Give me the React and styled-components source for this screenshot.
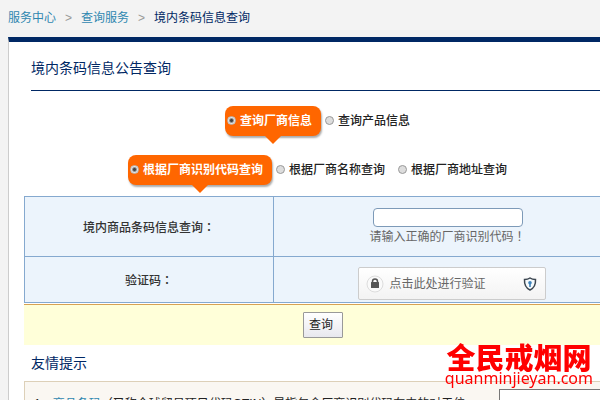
import React, { useState } from "react";
import styled, { createGlobalStyle } from "styled-components";

const GlobalStyle = createGlobalStyle`
  * {
    box-sizing: border-box;
  }

  body {
    margin: 0;
    height: 100vh;
    overflow: hidden;
    background: #f3f3f3;
    color: #333;
    font: 12px/18px "Liberation Sans", "Noto Sans CJK SC", sans-serif;
  }

  button,
  input {
    font: inherit;
  }
`;

const Breadcrumb = styled.nav`
  display: flex;
  gap: 9px;
  padding: 9px 8px 10px;
  color: #999;
`;

const Crumb = styled.a`
  color: ${(props) => (props.$current ? "#002864" : "#2f87b0")};
  text-decoration: none;
`;

const Panel = styled.main`
  margin-left: 8px;
  border-top: 5px solid #002864;
  border-left: 1px solid #ccc;
  background: white;
  overflow: hidden;
`;

const Content = styled.div`
  width: calc(100% + 22px);
  padding-left: 15px;
`;

const Title = styled.h1`
  margin: 0 0 0 7px;
  padding: 16px 0 12px;
  border-bottom: 1px solid #002864;
  color: #002864;
  font-size: 14px;
  font-weight: normal;
  line-height: 20px;
`;

const SubTitle = styled.h2`
  margin: 0 0 0 7px;
  padding: 8px 0;
  color: #002864;
  font-size: 14px;
  font-weight: normal;
  line-height: 20px;
`;

const Options = styled.div`
  display: flex;
  justify-content: center;
  gap: 4px;
  padding: 15px 2px 0 0;
  height: ${(props) => (props.$last ? "56px" : "49px")};
`;

const Option = styled.label`
  position: relative;
  display: flex;
  align-items: center;
  gap: 4px;
  height: 30px;
  padding: ${(props) => (props.$active ? "0 9px 0 2px" : "0 9px 0 0")};
  border-radius: 8px;
  color: ${(props) => (props.$active ? "white" : "#222")};
  font-weight: ${(props) => (props.$active ? "bold" : "500")};
  background: ${(props) => (props.$active ? "#ff6600" : "none")};
  box-shadow: ${(props) => (props.$active ? "1px 2px 2px #aaa" : "none")};

  &::after {
    content: "";
    display: ${(props) => (props.$active ? "block" : "none")};
    position: absolute;
    top: 100%;
    left: 50%;
    margin-left: -8px;
    border: 8px solid transparent;
    border-top-color: #ff6600;
    border-bottom: 0;
  }
`;

const Radio = styled.input`
  appearance: none;
  width: 9px;
  height: 9px;
  margin: 0 0 2px;
  border: 1px solid #999;
  border-radius: 50%;
  background: #ddd;

  &:checked {
    border-color: #bbb;
    background: radial-gradient(#444 0 1px, #e4e4e4 3px);
  }
`;

const QueryTable = styled.table`
  width: 100%;
  table-layout: fixed;
  border-collapse: collapse;
  background: #ecf4fc;
`;

const HeadCell = styled.th`
  width: 249px;
  height: ${(props) => props.$height};
  padding: 2px 0 0;
  border: 1px solid #85a9cf;
  font-weight: 500;
  text-align: center;
`;

const Cell = styled.td`
  padding: 0;
  border: 1px solid #85a9cf;
  color: #666;
  text-align: center;
`;

// punctuation centred in its em box
const Mark = styled.span`
  font-family: "Noto Sans CJK TC", sans-serif;
`;

const CodeInput = styled.input`
  display: block;
  width: 150px;
  height: 19px;
  margin: 0 auto;
  border: 1px solid #7d9ab8;
  border-radius: 4px;
  background: white;
`;

const VerifyCell = styled(Cell)`
  padding: 8px 0 0 8px;
`;

const Verify = styled.button`
  display: flex;
  align-items: center;
  gap: 6px;
  width: 188px;
  height: 33px;
  margin: 0 auto;
  padding: 0 8px 0 7px;
  border: 1px solid #ccc;
  border-radius: 2px;
  background: linear-gradient(#fff, #f3f3f3);
  color: #666;
`;

const VerifyText = styled.span`
  flex: 1;
  text-align: left;
`;

const Actions = styled.div`
  display: flex;
  justify-content: center;
  margin-top: 1px;
  padding: 7px 0;
  border-top: 1px solid #d7a252;
  background: #ffffd9;
`;

const Submit = styled.button`
  width: 40px;
  height: 26px;
  padding: 0 0 0 5px;
  border: 1px solid #999;
  border-radius: 1px;
  background: linear-gradient(#fff, #e8e8ee);
  color: #222;
  text-align: left;
`;

const Tips = styled.section`
  display: flex;
  height: 60px;
  border: 1px solid #ddd0b8;
  background: #faf7f2;
  color: #222;
`;

const TipText = styled.p`
  flex: 1;
  margin: 13px 0 0 9px;
  white-space: nowrap;
  overflow: hidden;
`;

const SideBox = styled.div`
  width: 122px;
  margin-top: 7px;
  border: 1px solid #777;
  background: white;
`;

const Watermark = styled.div`
  position: fixed;
  right: 7px;
  bottom: 14px;
  color: #f00;
  text-align: center;
`;

const BrandName = styled.div`
  font: 900 29px/27px "Noto Sans CJK SC", sans-serif;
`;

const BrandUrl = styled.div`
  font: 16px/16px "Noto Sans", sans-serif;
`;

const LockIcon = () => (
  <svg width="18" height="18" viewBox="0 0 18 18">
    <circle cx="9" cy="9" r="8" fill="#fafafa" stroke="#ddd" />
    <path d="M6.5 8V6.5a2.5 2.5 0 0 1 5 0V8" fill="none" stroke="#555" strokeWidth="1.5" />
    <rect x="5" y="7" width="8" height="6" rx="0.5" fill="#555" />
  </svg>
);

const ShieldIcon = () => (
  <svg width="14" height="14" viewBox="0 0 14 14">
    <path
      d="M7 1C5.5 2 3.5 2.4 1.5 2.4C1.2 7.5 2.5 11 7 13C11.5 11 12.8 7.5 12.5 2.4C10.5 2.4 8.5 2 7 1Z"
      fill="#f5fafc"
      stroke="#3c4650"
      strokeWidth="1.5"
    />
    <circle cx="7" cy="5.7" r="1.8" fill="#3f83ba" />
    <path d="M6.2 6h1.6v4H6.2z" fill="#3f83ba" />
  </svg>
);

const kinds = ["查询厂商信息", "查询产品信息"];
const methods = ["根据厂商识别代码查询", "根据厂商名称查询", "根据厂商地址查询"];

const RadioRow = ({ name, items, last }) => {
  const [selected, setSelected] = useState(items[0]);

  return (
    <Options $last={last}>
      {items.map((item) => (
        <Option key={item} $active={item === selected}>
          <Radio
            type="radio"
            name={name}
            checked={item === selected}
            onChange={() => setSelected(item)}
          />
          {item}
        </Option>
      ))}
    </Options>
  );
};

const App = () => (
  <>
    <GlobalStyle />
    <Breadcrumb>
      <Crumb href="#service">服务中心</Crumb>
      <span>&gt;</span>
      <Crumb href="#query">查询服务</Crumb>
      <span>&gt;</span>
      <Crumb href="#barcode" $current>
        境内条码信息查询
      </Crumb>
    </Breadcrumb>
    <Panel>
      <Content>
        <Title>境内条码信息公告查询</Title>
        <RadioRow name="kind" items={kinds} />
        <RadioRow name="method" items={methods} last />
        <QueryTable>
          <tbody>
            <tr>
              <HeadCell $height="60px">
                <label htmlFor="code">
                  境内商品条码信息查询<Mark>：</Mark>
                </label>
              </HeadCell>
              <Cell>
                <CodeInput id="code" type="text" />
                请输入正确的厂商识别代码<Mark>！</Mark>
              </Cell>
            </tr>
            <tr>
              <HeadCell $height="46px">
                验证码<Mark>：</Mark>
              </HeadCell>
              <VerifyCell>
                <Verify type="button">
                  <LockIcon />
                  <VerifyText>点击此处进行验证</VerifyText>
                  <ShieldIcon />
                </Verify>
              </VerifyCell>
            </tr>
          </tbody>
        </QueryTable>
        <Actions>
          <Submit type="submit">查询</Submit>
        </Actions>
        <SubTitle>友情提示</SubTitle>
        <Tips>
          <TipText>
            1、<Crumb href="#gtin">商品条码</Crumb>（又称全球贸易项目代码GTIN）是指包含厂商识别代码在内的对于位
          </TipText>
          <SideBox />
        </Tips>
      </Content>
    </Panel>
    <Watermark>
      <BrandName>全民戒烟网</BrandName>
      <BrandUrl>quanminjieyan.com</BrandUrl>
    </Watermark>
  </>
);

export default App;
